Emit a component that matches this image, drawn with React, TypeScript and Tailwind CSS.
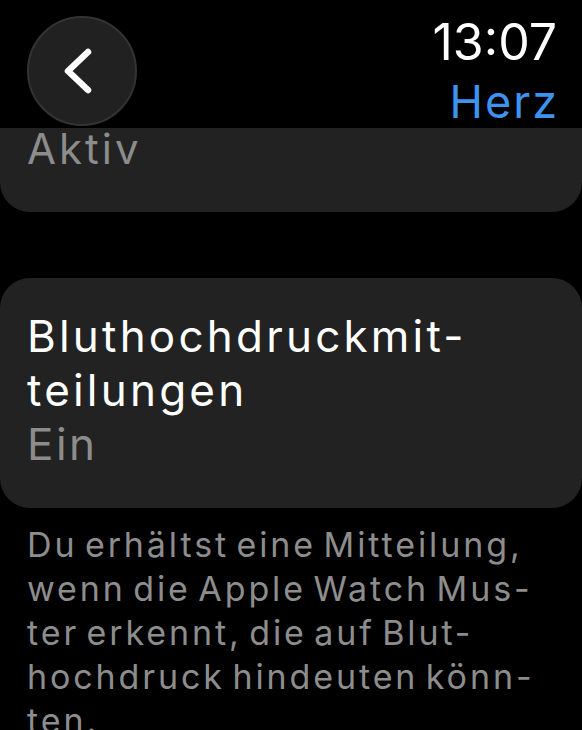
function BackButton() {
  return (
    <button className="flex h-[110px] w-[110px] items-center justify-center rounded-full border-2 border-[#333333] bg-[#212121]">
      <svg viewBox="0 0 30 46" className="-ml-[9px] h-[46px] w-[30px]" fill="none">
        <path
          d="M25 4 L5 23 L25 42"
          stroke="white"
          strokeWidth="6.5"
          strokeLinecap="round"
          strokeLinejoin="round"
        />
      </svg>
    </button>
  );
}

export default function App() {
  return (
    <div className="h-[730px] w-[582px] overflow-hidden bg-black font-['Inter',sans-serif]">
      {/* top bar */}
      <header className="flex h-[128px] justify-between pl-[27px] pr-[25px] pt-[16px]">
        <BackButton />
        <div className="flex flex-col items-end pt-[1px]">
          <span className="text-[50px] leading-none text-white">13:07</span>
          <span className="-mr-[2px] mt-[12px] text-[45px] leading-none tracking-[2px] text-[#3d94f0]">Herz</span>
        </div>
      </header>

      {/* previous row, scrolled under the bar */}
      <div className="h-[84px] rounded-b-[30px] bg-[#222222] px-[27px]">
        <div className="text-[42px] leading-none tracking-[3px] text-[#8c8c8c]">Aktiv</div>
      </div>

      <div className="mt-[66px] h-[230px] rounded-[30px] bg-[#222222] px-[27px] pt-[31px]">
        <div className="text-[44px] leading-[54px] tracking-[3.2px] text-white">
          Bluthochdruckmit-
          <br />
          teilungen
        </div>
        <div className="text-[44px] leading-[54px] tracking-[2.5px] text-[#8c8c8c]">Ein</div>
      </div>

      <p className="mt-[15px] whitespace-nowrap pl-[27px] text-[34px] leading-[44px] tracking-[2.9px] [word-spacing:-5px] text-[#8d8d8d]">
        Du erhältst eine Mitteilung,
        <br />
        wenn die Apple Watch Mus-
        <br />
        ter erkennt, die auf Blut-
        <br />
        hochdruck hindeuten könn-
        <br />
        ten.
      </p>
    </div>
  );
}
